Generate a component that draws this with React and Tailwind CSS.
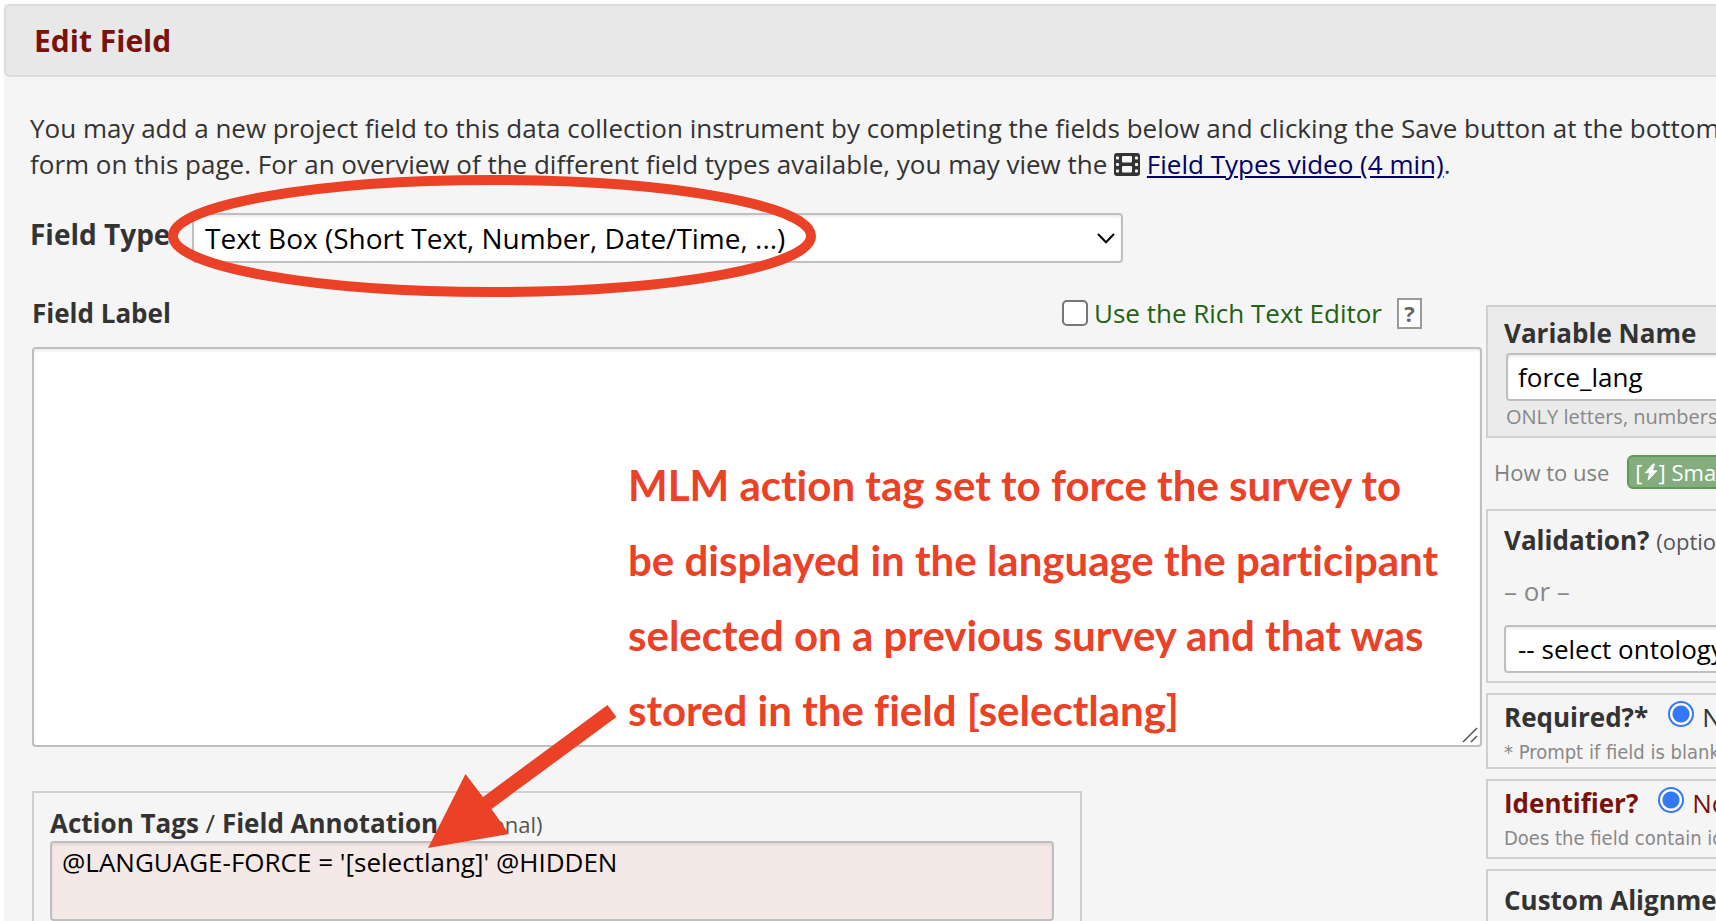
import { useState } from 'react';

const LABEL = 'text-[26px] leading-8 font-bold';
const FIELD = 'rounded-[4px] border-2 border-[#bfbfbf] bg-white text-black shadow-[inset_0_2px_3px_rgba(0,0,0,0.08)] outline-none';
const PANEL = 'overflow-hidden whitespace-nowrap border-2 border-r-0 border-[#d0d0d0] pl-4';

function FilmIcon(props) {
  return (
    <svg viewBox="0 0 26 23" width="26" height="23" {...props}>
      <rect width="26" height="23" rx="3" fill="currentColor" />
      <g fill="#f5f5f5">
        <rect x="8" y="3" width="10" height="6.500" rx="1" />
        <rect x="8" y="13" width="10" height="6.500" rx="1" />
        {[3.5, 10, 16.5].map((y) => (
          <g key={y}>
            <rect x="2" y={y} width="3" height="3" rx="0.700" />
            <rect x="21" y={y} width="3" height="3" rx="0.700" />
          </g>
        ))}
      </g>
    </svg>
  );
}

function BoltIcon(props) {
  return (
    <svg viewBox="0 0 14 18" width="14" height="18" {...props}>
      <path d="M9.300.800 1.200 9.700h4.600L4 17.200 12.800 7.800H8.200L10.500 1.200z" fill="currentColor" stroke="currentColor" strokeLinejoin="round" />
    </svg>
  );
}

function ChevronIcon(props) {
  return (
    <svg viewBox="0 0 18 11" width="18" height="11" {...props}>
      <path d="M1.500 1.500 9 9.200l7.500-7.700" fill="none" stroke="#000" strokeWidth="2" strokeLinecap="round" />
    </svg>
  );
}

function Radio({ id, name }) {
  return (
    <input
      id={id}
      name={name}
      type="radio"
      defaultChecked
      className="mb-1.5 size-[26px] shrink-0 appearance-none rounded-full border-2 border-[#3478f6] bg-white bg-[radial-gradient(circle,#3478f6_0_8px,white_9px)]"
    />
  );
}

function YesNoPanel({ title, name, hint, className, color }) {
  return (
    <fieldset className={`${PANEL} mt-[10px] pt-[6px] ${className}`}>
      <div className={`flex h-8 items-center ${color}`}>
        <span className={LABEL}>{title}</span>
        <span className="ml-5 flex items-center gap-2">
          <Radio id={`${name}-no`} name={name} />
          <label htmlFor={`${name}-no`} className="text-[26px] leading-8">No</label>
        </span>
      </div>
      <p className="mt-[5px] font-['DejaVu_Sans_Condensed','DejaVu_Sans',sans-serif] text-[20px] leading-7 text-[#888]">{hint}</p>
    </fieldset>
  );
}

// Red marker ring around the field type
function Ring() {
  return (
    <svg viewBox="0 0 648 122" width="648" height="122" className="pointer-events-none absolute -top-[38px] left-[138px]">
      <ellipse cx="324" cy="61" rx="319" ry="56" fill="none" stroke="#eb4126" strokeWidth="10" />
    </svg>
  );
}

function Arrow() {
  return (
    <svg viewBox="0 0 190 144" width="190" height="144" className="pointer-events-none absolute top-[408px] left-[396px]">
      <path d="M179.500 0 188.500 12 63.500 104 81 129 0 143 37.500 69 55 92z" fill="#eb4126" />
    </svg>
  );
}

export default function App() {
  const [label, setLabel] = useState('');
  const [annotation, setAnnotation] = useState("@LANGUAGE-FORCE = '[selectlang]' @HIDDEN");
  const [variable, setVariable] = useState('force_lang');

  return (
    <div className="min-h-screen overflow-hidden bg-white pt-1 pl-1 font-['Open_Sans',sans-serif] text-[#333]">
      <div className="bg-[#f5f5f5]">
        <header className="flex h-[73px] items-center rounded-l-md border-2 border-r-0 border-[#dcdcdc] bg-[#e8e8e8] pl-7">
          <h1 className="text-[30px] leading-10 font-bold text-[#7a120c]">Edit Field</h1>
        </header>

        <main className="pt-[33px] pl-[26px]">
          <p className="text-[26px] leading-9 whitespace-nowrap">
            You may add a new project field to this data collection instrument by completing the fields below and clicking the Save button at the bottom of the
            <br />
            form on this page. For an overview of the different field types available, you may view the{' '}
            <FilmIcon className="inline align-[-2px]" />{' '}
            <a href="#video" className="text-[#000066] underline">Field Types video (4 min)</a>.
          </p>

          <div className="relative mt-[31px] flex items-start">
            <label htmlFor="field-type" className="w-[162px] text-[28px] leading-[42px] font-bold">Field Type:</label>
            <div className="relative w-[931px]">
              <select id="field-type" className={`${FIELD} h-[50px] w-full appearance-none px-[11px] text-[28px]`}>
                <option>Text Box (Short Text, Number, Date/Time, ...)</option>
              </select>
              <ChevronIcon className="pointer-events-none absolute top-5 right-2" />
            </div>
            <Ring />
          </div>

          <div className="mt-[34px] flex gap-1 pl-0.5">
            <div className="relative min-w-0 flex-1">
              <div className="flex h-8 items-center">
                <label htmlFor="field-label" className={LABEL}>Field Label</label>
                <span className="mr-[60px] ml-auto flex items-center">
                  <input id="rich" type="checkbox" className="size-[26px] appearance-none rounded-[5px] border-2 border-[#767676] bg-white" />
                  <label htmlFor="rich" className="ml-[6px] text-[26px] leading-8 text-[#226211]">Use the Rich Text Editor</label>
                  <button className="ml-[15px] h-[31px] w-[25px] border-2 border-[#999] bg-white text-[22px] leading-[26px] font-bold text-[#666]">?</button>
                </span>
              </div>
              <div className="relative mt-[18px]">
                <textarea
                  id="field-label"
                  value={label}
                  onChange={(e) => setLabel(e.target.value)}
                  className={`${FIELD} block h-[400px] w-full resize-none px-3 text-[26px]`}
                />
                <svg viewBox="0 0 16 16" width="16" height="16" className="pointer-events-none absolute right-1 bottom-1">
                  <path d="M1 15 15 1M9 15l6-6" stroke="#555" strokeWidth="1.500" />
                </svg>
              </div>
              <p className="pointer-events-none absolute top-[151px] left-[596px] font-['Lato',sans-serif] text-[42px] leading-[75px] font-bold whitespace-nowrap text-[#eb4126] [font-variant-ligatures:none]">
                MLM action tag set to force the survey to
                <br />
                be displayed in the language the participant
                <br />
                selected on a previous survey and that was
                <br />
                stored in the field [selectlang]
              </p>

              <section className="mt-[44px] w-[1050px] border-2 border-[#d0d0d0] pt-[13px] pr-[26px] pb-6 pl-4">
                <label htmlFor="annotation" className="block text-[26px] leading-[34px]">
                  <b>Action Tags</b> / <b>Field Annotation</b> <span className="text-[22px] text-[#555]">(optional)</span>
                </label>
                <textarea
                  id="annotation"
                  value={annotation}
                  onChange={(e) => setAnnotation(e.target.value)}
                  className={`${FIELD} block h-20 w-full resize-none bg-[#f5e9e8]! px-[10px] pt-px text-[26px] leading-9`}
                />
              </section>
              <Arrow />
            </div>

            <aside className="mt-2 w-[230px] shrink-0">
              <section className={`${PANEL} bg-[#ebebeb] pt-[10px] pb-[5px]`}>
                <label htmlFor="variable" className={`block ${LABEL}`}>Variable Name</label>
                <input
                  id="variable"
                  value={variable}
                  onChange={(e) => setVariable(e.target.value)}
                  className={`${FIELD} mt-1 ml-0.5 block h-12 w-[400px] px-[10px] text-[26px]`}
                />
                <p className="mt-0.5 pl-0.5 text-[20px] leading-7 text-[#888]">ONLY letters, numbers, and underscores</p>
              </section>

              <div className="mt-[17px] mb-5 flex items-center overflow-hidden pl-2 text-[22px] leading-[30px] whitespace-nowrap text-[#808080]">
                How to use
                <button className="ml-[18px] flex items-center rounded-[6px] border-2 border-[#5f9a58] bg-[#84ac7e] px-1.5 font-medium text-white">
                  [<BoltIcon className="mx-px" />]&nbsp;Smart Variables
                </button>
              </div>

              <section className={`${PANEL} pt-[13px] pb-2`}>
                <h2 className={LABEL}>
                  Validation? <span className="text-[22px] font-normal text-[#555]">(optional)</span>
                </h2>
                <p className="mt-[18px] text-[26px] leading-8 text-[#888]">– or –</p>
                <select aria-label="Ontology" className={`${FIELD} mt-[18px] block h-12 w-[400px] appearance-none px-3 text-[26px]`}>
                  <option>-- select ontology service --</option>
                </select>
              </section>

              <YesNoPanel title="Required?*" name="required" hint="* Prompt if field is blank" className="pb-[1px]" color="text-[#333]" />
              <YesNoPanel
                title="Identifier?"
                name="identifier"
                hint="Does the field contain identifying information?"
                className="pb-[5px]"
                color="text-[#7a120c]"
              />

              <section className={`${PANEL} mt-[10px] pt-[13px] pb-4`}>
                <h2 className={LABEL}>Custom Alignment</h2>
              </section>
            </aside>
          </div>
        </main>
      </div>
    </div>
  );
}
